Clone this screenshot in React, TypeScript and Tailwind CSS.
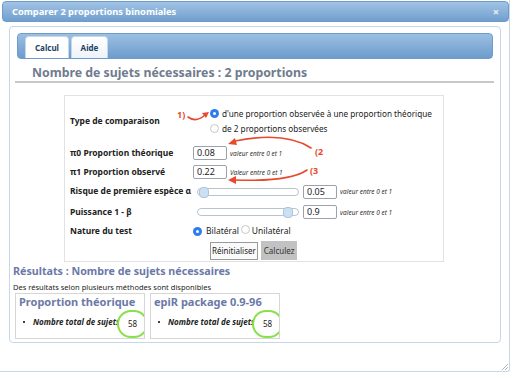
import React from "react";

function Radio({ checked }: { checked?: boolean }) {
  return checked ? (
    <span className="inline-flex h-[9px] w-[9px] shrink-0 items-center justify-center rounded-full bg-[#2f7bf0]">
      <span className="h-[3px] w-[3px] rounded-full bg-white" />
    </span>
  ) : (
    <span className="inline-block h-[9px] w-[9px] shrink-0 rounded-full border border-[#c8c8c8] bg-white" />
  );
}

function Slider({ pos }: { pos: "start" | "end" }) {
  return (
    <div className="relative h-[8px] w-[102px] rounded-full border border-[#b9c3cc] bg-white">
      <div
        className={`absolute top-[-2px] h-[11px] w-[10px] rounded-[4px] border border-[#a9c4df] bg-[#cde0f2] ${
          pos === "start" ? "left-[1px]" : "right-[5px]"
        }`}
      />
    </div>
  );
}

function NumInput({ value }: { value: string }) {
  return (
    <div className="flex h-[14px] w-[34px] items-center rounded-[2px] border border-[#9aa3ad] bg-white pl-[3px] text-[9px] text-[#222]">
      {value}
    </div>
  );
}

function Hint({ text }: { text: string }) {
  return <span className="text-[6.5px] italic text-[#333]">{text}</span>;
}

function ResultBox({ title }: { title: string }) {
  return (
    <div className="relative h-[46px] w-[130px] overflow-hidden border border-[#d6d6d6] bg-white">
      <div className="pl-[3px] pt-[1px] text-[11px] font-bold leading-[14px] text-[#6b79a8]">{title}</div>
      <div className="mt-[7px] flex items-center pl-[7px] text-[8px]">
        <span className="mr-[8px] h-[2px] w-[2px] rounded-full bg-black" />
        <span className="whitespace-nowrap font-bold italic">Nombre total de sujets :</span>
      </div>
      <div className="absolute left-[101px] top-[16px] flex h-[28px] w-[31px] items-center justify-center rounded-full border-2 border-[#88e04c] bg-white text-[8px]">
        58
      </div>
    </div>
  );
}

export default function App() {
  return (
    <div className="relative h-[372px] w-[512px] overflow-hidden bg-white font-['Noto_Sans',sans-serif] text-[#222]">
      <div className="h-[372px] w-[510px] rounded-br-[3px] border-b border-r border-[#c9d7e4] pt-[1px]">
        {/* title bar */}
        <div className="ml-[2px] flex h-[21px] w-[507px] items-center justify-between rounded-[4px] border border-[#6d9ccc] bg-gradient-to-b from-[#a2c3e5] to-[#709fce] pl-[9px] pr-[9px]">
          <span className="text-[9.3px] font-bold text-white">Comparer 2 proportions binomiales</span>
          <span className="text-[11px] font-bold leading-none text-[#e6eef7]">×</span>
        </div>

        {/* panel */}
        <div className="ml-[9px] mt-[4px] h-[317px] w-[492px] rounded-[4px] border border-[#c5d7ea] bg-white">
          <div className="ml-[7px] mt-[6px] flex h-[26px] w-[476px] items-end gap-[2px] rounded-[4px] border border-[#6d9ccc] bg-gradient-to-b from-[#9bbfe3] to-[#6d9ccb] pl-[7px]">
            <div className="flex h-[22px] w-[44px] items-center justify-center rounded-t-[4px] border border-b-0 border-[#c5d7ea] bg-white text-[8px] font-bold text-[#233f63]">
              Calcul
            </div>
            <div className="flex h-[22px] w-[37px] items-center justify-center rounded-t-[4px] border border-b-0 border-[#c5d7ea] bg-gradient-to-b from-white to-[#eef3f9] text-[8px] font-bold text-[#233f63]">
              Aide
            </div>
          </div>

          <div className="ml-[5px] mt-[6px] w-[479px] border-b-2 border-[#c8c8c8] pl-[17px] text-[12.3px] font-bold leading-[16px] text-[#6f7b8e]">
            Nombre de sujets nécessaires : 2 proportions
          </div>

          {/* form */}
          <div className="ml-[54px] mt-[12px] h-[167px] w-[380px] border border-[#e2e2e2] pl-[5px] pt-[10px] text-[8.5px]">
            <div className="flex h-[30px] items-center">
              <span className="w-[140px] font-bold">Type de comparaison</span>
              <div className="flex flex-col gap-[4px] text-[8.2px] leading-[11px]">
                <div className="flex items-center gap-[3px]">
                  <Radio checked />
                  <span>d'une proportion observée à une proportion théorique</span>
                </div>
                <div className="flex items-center gap-[3px]">
                  <Radio />
                  <span>de 2 proportions observées</span>
                </div>
              </div>
            </div>
            <div className="mt-[8px] flex h-[18px] items-center">
              <span className="w-[123px] font-bold">π0 Proportion théorique</span>
              <NumInput value="0.08" />
              <span className="ml-[3px]">
                <Hint text="valeur entre 0 et 1" />
              </span>
            </div>
            <div className="mt-[1px] flex h-[18px] items-center">
              <span className="w-[123px] font-bold">π1 Proportion observé</span>
              <NumInput value="0.22" />
              <span className="ml-[3px]">
                <Hint text="Valeur entre 0 et 1" />
              </span>
            </div>
            <div className="mt-[2px] flex h-[17px] items-center">
              <span className="w-[127px] font-bold">Risque de première espèce α</span>
              <Slider pos="start" />
              <span className="ml-[4px]">
                <NumInput value="0.05" />
              </span>
              <span className="ml-[3px]">
                <Hint text="valeur entre 0 et 1" />
              </span>
            </div>
            <div className="mt-[3px] flex h-[18px] items-center">
              <span className="w-[127px] font-bold">Puissance 1 - β</span>
              <Slider pos="end" />
              <span className="ml-[4px]">
                <NumInput value="0.9" />
              </span>
              <span className="ml-[3px]">
                <Hint text="valeur entre 0 et 1" />
              </span>
            </div>
            <div className="mt-[1px] flex h-[18px] items-center">
              <span className="w-[123px] font-bold">Nature du test</span>
              <Radio checked />
              <span className="ml-[4px]">Bilatéral</span>
              <span className="ml-[2px]">
                <Radio />
              </span>
              <span className="ml-[2px]">Unilatéral</span>
            </div>
            <div className="mt-[1px] flex h-[19px] items-center pl-[140px]">
              <button className="h-[18px] border border-[#9a9a9a] bg-[#fafafa] px-[1px] text-[8px]">Réinitialiser</button>
              <button className="ml-[3px] h-[19px] bg-[#c2c2c2] px-[3px] text-[8px] text-[#333]">Calculez</button>
            </div>
          </div>

          {/* results */}
          <div className="mt-[2px] pl-[3px] text-[10.7px] font-bold leading-[14px] text-[#6b79a8]">
            Résultats : Nombre de sujets nécessaires
          </div>
          <div className="mt-[4px] pl-[3px] text-[7.5px] leading-[10px]">Des résultats selon plusieurs méthodes sont disponibles</div>
          <div className="ml-[5px] mt-[1px] flex gap-[5px]">
            <ResultBox title="Proportion théorique" />
            <ResultBox title="epiR package 0.9-96" />
          </div>
        </div>
      </div>

      {/* resize grip */}
      <svg className="absolute bottom-[2px] right-[4px]" width="7" height="7" viewBox="0 0 7 7">
        <path d="M7 1 L1 7 M7 4 L4 7" stroke="#a8b8c8" strokeWidth="1" />
      </svg>

      {/* annotations */}
      <svg className="pointer-events-none absolute left-0 top-0" width="512" height="372" viewBox="0 0 512 372">
        <g fill="none" stroke="#e8492e" strokeWidth="1.6" strokeLinecap="round">
          <path d="M188 117 Q196 123 205 115" />
          <path d="M311 148 Q285 131 235 141" />
          <path d="M307 170 Q290 182 235 180" />
        </g>
        <g fill="#e8492e">
          <polygon points="209,112 202,113 206,118" />
          <polygon points="228,144 235,138 237,145" />
          <polygon points="228,180 236,176 236,184" />
          <text x="177" y="118" fontSize="9" fontWeight="bold" fontFamily="Noto Sans, sans-serif">1)</text>
          <text x="315" y="155" fontSize="9" fontWeight="bold" fontFamily="Noto Sans, sans-serif">(2</text>
          <text x="310" y="174" fontSize="9" fontWeight="bold" fontFamily="Noto Sans, sans-serif">(3</text>
        </g>
      </svg>
    </div>
  );
}
